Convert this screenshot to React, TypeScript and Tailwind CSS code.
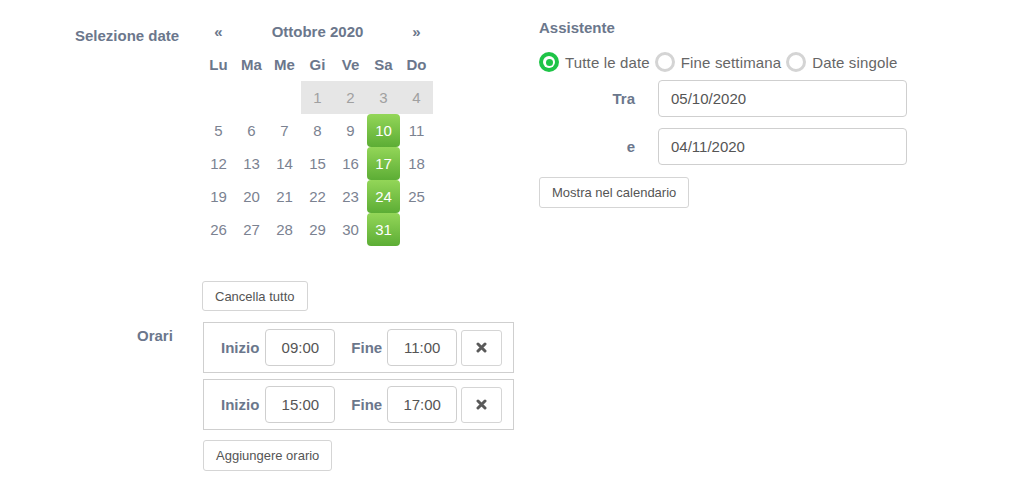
import * as React from "react";

const font = { fontFamily: '"Liberation Sans", Arial, sans-serif' };

const weeks: (number | null)[][] = [
  [null, null, null, 1, 2, 3, 4],
  [5, 6, 7, 8, 9, 10, 11],
  [12, 13, 14, 15, 16, 17, 18],
  [19, 20, 21, 22, 23, 24, 25],
  [26, 27, 28, 29, 30, 31, null],
];
const dayNames = ["Lu", "Ma", "Me", "Gi", "Ve", "Sa", "Do"];
const selected = [10, 17, 24, 31];
const past = [1, 2, 3, 4];

function Btn({ children, className = "" }: { children: React.ReactNode; className?: string }) {
  return (
    <button
      className={`rounded-[3px] border border-[#d5d5d5] bg-white px-[12px] text-[13px] text-[#555] ${className}`}
    >
      {children}
    </button>
  );
}

function Calendar() {
  return (
    <div className="w-[231px]">
      <div className="grid h-[33px] grid-cols-7 items-center text-[15px] font-bold text-[#6b778c]">
        <div className="text-center">«</div>
        <div className="col-span-5 text-center">Ottobre 2020</div>
        <div className="text-center">»</div>
      </div>
      <div className="grid h-[33px] grid-cols-7 items-center text-[15px] font-bold text-[#6b778c]">
        {dayNames.map((d) => (
          <div key={d} className="text-center">
            {d}
          </div>
        ))}
      </div>
      {weeks.map((w, i) => (
        <div key={i} className="grid h-[33px] grid-cols-7 text-[15px]">
          {w.map((d, j) => {
            if (d === null) return <div key={j} />;
            const sel = selected.includes(d);
            const old = past.includes(d);
            return (
              <div
                key={j}
                className={`flex items-center justify-center ${
                  sel
                    ? "rounded-[4px] bg-gradient-to-b from-[#93d658] to-[#5cad35] text-white"
                    : old
                    ? "bg-[#e6e6e6] text-[#a0a0a0]"
                    : "text-[#7b8291]"
                }`}
              >
                {d}
              </div>
            );
          })}
        </div>
      ))}
    </div>
  );
}

function TimeRow({ start, end }: { start: string; end: string }) {
  return (
    <div className="flex h-[51px] w-[311px] items-center border border-[#cfcfcf] pl-[17px]">
      <span className="mr-[6px] text-[15px] font-bold text-[#6b778c]">Inizio</span>
      <div className="flex h-[37px] w-[70px] items-center justify-center rounded-[4px] border border-[#cfcfcf] text-[15px] text-[#555]">
        {start}
      </div>
      <span className="ml-[16px] mr-[5px] text-[15px] font-bold text-[#6b778c]">Fine</span>
      <div className="flex h-[37px] w-[70px] items-center justify-center rounded-[4px] border border-[#cfcfcf] text-[15px] text-[#555]">
        {end}
      </div>
      <button className="ml-[4px] flex h-[36px] w-[41px] items-center justify-center rounded-[3px] border border-[#d5d5d5] bg-white">
        <svg width="11" height="11" viewBox="0 0 11 11">
          <path d="M2 2 L9 9 M9 2 L2 9" stroke="#5a5a5a" strokeWidth="3" strokeLinecap="round" />
        </svg>
      </button>
    </div>
  );
}

function Radio({ checked }: { checked?: boolean }) {
  return checked ? (
    <span className="flex h-[20px] w-[20px] items-center justify-center rounded-full bg-[#1ec447]">
      <span className="flex h-[12px] w-[12px] items-center justify-center rounded-full bg-white">
        <span className="h-[7px] w-[7px] rounded-full bg-[#1ec447]" />
      </span>
    </span>
  ) : (
    <span className="h-[20px] w-[20px] rounded-full border-[3px] border-[#d4d4d4] bg-white" />
  );
}

export default function App() {
  return (
    <div className="flex h-[495px] w-[1031px] bg-white pt-[15px] leading-[17px]" style={font}>
      <div className="ml-[75px] w-[464px]">
        <div className="flex">
          <div className="w-[127px] pt-[12px] text-[15px] font-bold text-[#6b778c]">Selezione date</div>
          <Calendar />
        </div>
        <Btn className="ml-[127px] mt-[35px] h-[30px]">Cancella tutto</Btn>
        <div className="mt-[11px] flex">
          <div className="w-[128px] pl-[62px] pt-[5px] text-[15px] font-bold text-[#6b778c]">Orari</div>
          <div className="flex flex-col gap-[6px]">
            <TimeRow start="09:00" end="11:00" />
            <TimeRow start="15:00" end="17:00" />
          </div>
        </div>
        <Btn className="ml-[128px] mt-[10px] h-[31px]">Aggiungere orario</Btn>
      </div>
      <div className="w-[368px]">
        <div className="mt-[4px] text-[15px] font-bold text-[#6b778c]">Assistente</div>
        <div className="mt-[16px] flex h-[20px] items-center text-[15px] tracking-[0.15px] text-[#666]">
          <Radio checked />
          <span className="ml-[6px] mr-[5px]">Tutte le date</span>
          <Radio />
          <span className="ml-[6px] mr-[5px]">Fine settimana</span>
          <Radio />
          <span className="ml-[6px]">Date singole</span>
        </div>
        <div className="mt-[8px] flex items-center">
          <div className="mr-[23px] w-[96px] text-right text-[15px] font-bold text-[#6b778c]">Tra</div>
          <div className="flex h-[37px] w-[249px] items-center rounded-[4px] border border-[#cfcfcf] px-[12px] text-[15px] text-[#555]">
            05/10/2020
          </div>
        </div>
        <div className="mt-[11px] flex items-center">
          <div className="mr-[23px] w-[96px] text-right text-[15px] font-bold text-[#6b778c]">e</div>
          <div className="flex h-[37px] w-[249px] items-center rounded-[4px] border border-[#cfcfcf] px-[12px] text-[15px] text-[#555]">
            04/11/2020
          </div>
        </div>
        <Btn className="mt-[12px] h-[31px]">Mostra nel calendario</Btn>
      </div>
    </div>
  );
}
